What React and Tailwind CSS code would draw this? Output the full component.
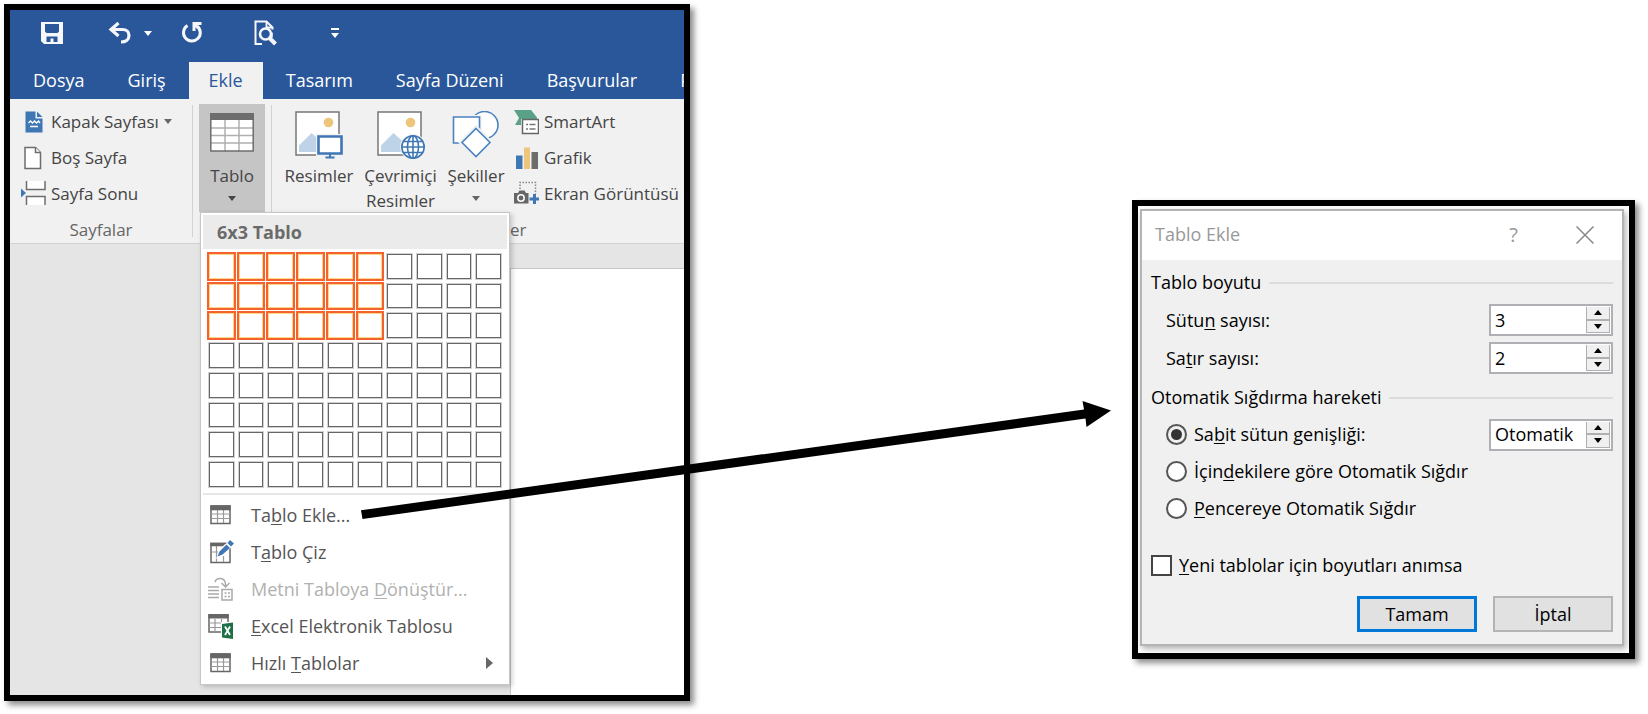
import { useState } from 'react';

const TABS = ['Dosya', 'Giriş', 'Ekle', 'Tasarım', 'Sayfa Düzeni', 'Başvurular', 'P'];
const GRID_COLS = 10;
const GRID_ROWS = 8;

function SaveIcon() {
    return (
        <svg width="22" height="22" viewBox="0 0 22 22">
            <path d="M0 0h22v22H3l-3-3z" fill="#f5f7fa" />
            <path d="M4 2h14v7.500l-1.500 1.500h-11L4 9.500zM5.500 14.500h11V20h-4v-3.500H9.500V20h-4z" fill="#2a579a" />
        </svg>
    );
}

function UndoIcon() {
    return (
        <svg width="24" height="22" viewBox="0 0 24 22" fill="none" stroke="#f5f7fa">
            <path d="M3 7.5h11.5c4 0 6.500 2.500 6.500 6 0 3.800-3 6.500-8 6.500" strokeWidth="3.2" />
            <path d="M10.500 1L3 7.500l7.500 6.500" strokeWidth="3.2" />
        </svg>
    );
}

function RedoIcon() {
    return (
        <svg width="22" height="22" viewBox="0 0 22 22" fill="none" stroke="#f5f7fa">
            <path d="M6.500 3.500a8.400 8.400 0 1 0 9.500.500" strokeWidth="3" />
            <path d="M20.500 1.500H13v7.500" strokeWidth="3" />
            <path d="M13 2l4 4" strokeWidth="2.500" />
        </svg>
    );
}

function PreviewIcon() {
    return (
        <svg width="24" height="26" viewBox="0 0 24 26" fill="none" stroke="#f5f7fa">
            <path d="M8 24H1.500V1.500h11l6 6v2" strokeWidth="2" />
            <path d="M12.500 2v5.500h5.500" strokeWidth="1.800" />
            <circle cx="11.500" cy="14" r="5.500" strokeWidth="2.600" />
            <path d="M15.500 18l6 6" strokeWidth="4" />
            <path d="M18 12.500v5" strokeWidth="1.600" />
        </svg>
    );
}

function Caret({ className = 'text-[#666]' }) {
    return (
        <svg className={className} width="8" height="5" viewBox="0 0 8 5" fill="currentColor">
            <path d="M0 0h8L4 5z" />
        </svg>
    );
}

function CoverPageIcon() {
    return (
        <svg width="25" height="24" viewBox="0 0 25 24">
            <path d="M4.500 1.500h10v7h7v14h-17z" fill="#3f77b5" />
            <path d="M16 1.500l5.500 5.500H16z" fill="#3f77b5" />
            <path d="M7.500 13l2-2 2 2 2-2 2 2 2-2 1.500 2" fill="none" stroke="#fff" strokeWidth="1.300" />
            <path d="M9 16.500h8" stroke="#fff" strokeWidth="1.500" />
        </svg>
    );
}

function BlankPageIcon() {
    return (
        <svg width="25" height="24" viewBox="0 0 25 24" fill="#fff" stroke="#6d6d6d" strokeWidth="1.500">
            <path d="M4 1.500h10.500l5 5v16H4z" />
            <path d="M14.500 1.500v5h5" />
        </svg>
    );
}

function PageBreakIcon() {
    return (
        <svg width="25" height="24" viewBox="0 0 25 24">
            <path d="M5.500 0h18.500v8.500H5.500zM5.500 15.500h18.500V24H5.500z" fill="#fff" />
            <path d="M5.500 0v8.500h18.500V0M5.500 24v-8.500h18.500V24" fill="none" stroke="#6d6d6d" strokeWidth="1.500" />
            <path d="M0 7.500l5 4.500-5 4.500z" fill="#3f77b5" />
        </svg>
    );
}

function TableIcon() {
    return (
        <svg width="44" height="39" viewBox="0 0 44 39">
            <path d="M1 1h42v37H1z" fill="#fff" />
            <path d="M0 15h44M0 22.500h44M0 30h44M15 7v31M29 7v31" stroke="#b0b0b0" strokeWidth="1.500" />
            <path d="M0 0h44v7H0z" fill="#6d6d6d" />
            <path d="M.8 1h42.400v37H.8z" fill="none" stroke="#6d6d6d" strokeWidth="1.500" />
        </svg>
    );
}

function PictureBase() {
    return (
        <>
            <path d="M1 1h43v43H1z" fill="#fff" stroke="#777" strokeWidth="1.500" />
            <circle cx="33.500" cy="11.500" r="4.800" fill="#edc57b" />
            <path d="M4 41V34.500L16.500 22l11 10v9z" fill="#bfd3e8" />
        </>
    );
}

function PictureIcon() {
    return (
        <svg width="48" height="48" viewBox="0 0 48 48">
            <PictureBase />
            <path d="M21 23h27v25H21z" fill="#f1f1f1" />
            <path d="M23.500 25.500h23v17h-23z" fill="#fff" stroke="#3f77b5" strokeWidth="2.600" />
            <path d="M35 42v4M30.500 46.500h9" stroke="#3f77b5" strokeWidth="2" />
        </svg>
    );
}

function OnlinePictureIcon() {
    return (
        <svg width="48" height="48" viewBox="0 0 48 48">
            <PictureBase />
            <circle cx="36" cy="36" r="13" fill="#f1f1f1" />
            <g fill="none" stroke="#3f77b5" strokeWidth="1.600">
                <circle cx="36" cy="36" r="11.200" fill="#fff" />
                <ellipse cx="36" cy="36" rx="5.500" ry="11.200" />
                <path d="M24.800 36h22.400M36 25v22M26.500 30.500h19M26.500 41.500h19" />
            </g>
        </svg>
    );
}

function ShapesIcon() {
    return (
        <svg width="48" height="48" viewBox="0 0 48 48" fill="#fff" stroke="#4a83c0" strokeWidth="1.600">
            <circle cx="32.500" cy="14" r="13.500" />
            <path d="M1.500 6h26v26h-26z" stroke="#f1f1f1" strokeWidth="4" />
            <path d="M1.500 6h26v26h-26z" />
            <path d="M24 16.500L39 31.500 24 46.500 9 31.500z" stroke="#f1f1f1" strokeWidth="4" />
            <path d="M24 17.500L38 31.500 24 45.500 10 31.500z" />
        </svg>
    );
}

function SmartArtIcon() {
    return (
        <svg width="25" height="26" viewBox="0 0 25 26">
            <path d="M0 1h17l6 7.500v1.500H7v6H1l4-7z" fill="#5aa287" />
            <path d="M8.500 10.500h16v14h-16z" fill="#fff" stroke="#666" strokeWidth="1.500" />
            <path d="M12 15.500h2M15.500 15.500h6M12 20h2M15.500 20h6" stroke="#777" strokeWidth="1.400" />
        </svg>
    );
}

function ChartIcon() {
    return (
        <svg width="25" height="24" viewBox="0 0 25 24">
            <path d="M2 9.500h6.500V23H2z" fill="#3f77b5" />
            <path d="M10 1.500h6V23h-6z" fill="#edc57b" />
            <path d="M17.500 6h6.500v17h-6.500z" fill="#6d6d6d" />
        </svg>
    );
}

function ScreenshotIcon() {
    return (
        <svg width="25" height="24" viewBox="0 0 25 24">
            <path d="M6 8V1.500h15.500V13" fill="none" stroke="#888" strokeWidth="1.500" strokeDasharray="1.500 1.500" />
            <path d="M0 12h4l1.500-2.500h5l1.500 2.500h2.500v10.500H0z" fill="#666" />
            <circle cx="7" cy="17" r="3.200" fill="none" stroke="#fff" strokeWidth="1.500" />
            <path d="M20.500 13v10M15.500 18h10" stroke="#3f77b5" strokeWidth="3" />
        </svg>
    );
}

function InsertTableIcon() {
    return (
        <svg width="26" height="24" viewBox="0 0 26 24">
            <path d="M3 3h19v17.500H3z" fill="#fff" stroke="#666" strokeWidth="1.500" />
            <path d="M3 11h19M3 15.500h19M9.500 6v14M15.500 6v14" stroke="#999" strokeWidth="1.200" />
            <path d="M2.300 2.300h20.400v5H2.300z" fill="#666" />
        </svg>
    );
}

function DrawTableIcon() {
    return (
        <svg width="26" height="26" viewBox="0 0 26 26">
            <path d="M3 4.500h19v19H3z" fill="#fff" stroke="#666" strokeWidth="1.500" />
            <path d="M3 13h7M8.500 7v16M15.500 17v6" stroke="#999" strokeWidth="1.200" />
            <path d="M2.300 3.700H18l-3 3.500H2.300z" fill="#666" />
            <path d="M8 20l2.500-7L20 2.500l5 4L15 16.500z" fill="#fff" />
            <path d="M9.500 17.500l2-5 7-7 3.500 3.500-7.500 6.500zM19.500 4l2.500-3 4 3.500L23 7.500z" fill="#3f77b5" />
        </svg>
    );
}

function ConvertIcon() {
    return (
        <svg width="26" height="24" viewBox="0 0 26 24" fill="none" stroke="#aaa" strokeWidth="1.500">
            <path d="M0 10h11M0 13.500h11M0 17h11M0 20.500h11" />
            <path d="M7 5c1.500-5 10-5 10.500 2v2M13.500 6l4 4 4-4" />
            <path d="M14 12.500h10v10.500H14z" />
            <path d="M16.500 16h2M20 16h2M16.500 19.500h2M20 19.500h2" />
        </svg>
    );
}

function ExcelIcon() {
    return (
        <svg width="26" height="26" viewBox="0 0 26 26">
            <path d="M1 2h19v17H1z" fill="#fff" stroke="#666" strokeWidth="1.500" />
            <path d="M1 10h19M1 14.500h13M7 6v13M13.500 6v13" stroke="#999" strokeWidth="1.200" />
            <path d="M.3 1h20.400v4.500H.3z" fill="#666" />
            <path d="M13 9h13v17H13z" fill="#fff" />
            <path d="M14 11l11-1.500v16.500L14 24.500z" fill="#1e7145" />
            <path d="M17 13.500l5 8.500M22 13.500l-5 8.500" stroke="#fff" strokeWidth="1.800" />
        </svg>
    );
}

function Divider() {
    return <div className="mt-px h-[132px] w-px bg-[#d2d2d2]" />;
}

function SmallButton({ icon, label, caret }) {
    return (
        <button type="button" className="flex h-9 items-center gap-[5px] whitespace-nowrap">
            {icon}
            {label}
            {caret && <Caret />}
        </button>
    );
}

function LargeButton({ icon, children, caret, className }) {
    return (
        <button type="button" className={`flex flex-col items-center pt-[7px] leading-[25px] ${className}`}>
            {icon}
            <span className="mt-1">{children}</span>
            {caret && <Caret className="mt-2 text-[#666]" />}
        </button>
    );
}

function MenuItem({ icon, children, disabled, submenu }) {
    return (
        <button
            type="button"
            disabled={disabled}
            className="flex h-[37px] w-full items-center gap-[17px] pr-3.5 pl-[5px] text-left whitespace-nowrap disabled:text-[#b1b1b1]"
        >
            {icon}
            <span className="flex-1">{children}</span>
            {submenu && (
                <svg width="7" height="12" viewBox="0 0 7 12" fill="#666">
                    <path d="M0 0l7 6-7 6z" />
                </svg>
            )}
        </button>
    );
}

function TableMenu() {
    const [size, setSize] = useState({ cols: 6, rows: 3 });
    const cells = Array.from({ length: GRID_COLS * GRID_ROWS }, (_, i) => ({
        col: (i % GRID_COLS) + 1,
        row: Math.floor(i / GRID_COLS) + 1,
    }));

    return (
        <div className="absolute top-full left-px z-10 w-[310px] border border-[#c6c6c6] bg-white p-0.5 text-[18px] text-[#555] shadow-[2px_2px_5px_rgba(0,0,0,0.2)]">
            <div className="flex h-[34px] items-center bg-[#ebebeb] pl-3.5 font-bold text-[#6a6a6a]">
                {size.cols}x{size.rows} Tablo
            </div>
            <div className="mx-[6px] mt-[5px] mb-[6px] grid grid-cols-10 gap-[5px]">
                {cells.map(({ col, row }) => (
                    <button
                        key={`${col}-${row}`}
                        type="button"
                        aria-label={`${col}x${row}`}
                        onMouseEnter={() => setSize({ cols: col, rows: row })}
                        className={
                            col <= size.cols && row <= size.rows
                                ? 'aspect-square border border-[#ffd588] ring-2 ring-[#f4622d]'
                                : 'aspect-square border border-[#666] ring-1 ring-[#666]/30'
                        }
                    />
                ))}
            </div>
            <div className="mb-0.5 h-0.5 bg-[#e6e6e6]" />
            <MenuItem icon={<InsertTableIcon />}>Ta<u>b</u>lo Ekle...</MenuItem>
            <MenuItem icon={<DrawTableIcon />}>T<u>a</u>blo Çiz</MenuItem>
            <MenuItem icon={<ConvertIcon />} disabled>Metni Tabloya <u>D</u>önüştür...</MenuItem>
            <MenuItem icon={<ExcelIcon />}><u>E</u>xcel Elektronik Tablosu</MenuItem>
            <MenuItem icon={<InsertTableIcon />} submenu>Hızlı <u>T</u>ablolar</MenuItem>
        </div>
    );
}

function WordWindow() {
    return (
        <section className="overflow-hidden border-[6px] border-black bg-[#e5e5e5] text-[#444] shadow-[4px_4px_6px_rgba(0,0,0,0.45)]">
            {/* Title bar */}
            <div className="flex h-[52px] items-center bg-[#2a579a] pb-1.5 pl-[31px]">
                <button type="button" aria-label="Kaydet"><SaveIcon /></button>
                <button type="button" aria-label="Geri Al" className="ml-[45px]"><UndoIcon /></button>
                <button type="button" aria-label="Geri Al listesi" className="ml-3"><Caret className="text-white" /></button>
                <button type="button" aria-label="Yinele" className="ml-[29px]"><RedoIcon /></button>
                <button type="button" aria-label="Baskı Önizleme" className="ml-[51px]"><PreviewIcon /></button>
                <button type="button" aria-label="Özelleştir" className="ml-[53px]">
                    <svg width="8" height="10" viewBox="0 0 8 10" fill="#fff">
                        <path d="M0 0h8v2H0zM0 5h8L4 10z" />
                    </svg>
                </button>
            </div>

            {/* Ribbon tabs */}
            <nav className="flex h-[37px] gap-[3px] bg-[#2a579a] pl-[3px] text-white">
                {TABS.map((tab) => (
                    <button
                        key={tab}
                        type="button"
                        className={
                            tab === 'Ekle'
                                ? 'bg-[#f1f1f1] px-5 whitespace-nowrap text-[#2a579a]'
                                : 'px-5 whitespace-nowrap'
                        }
                    >
                        {tab}
                    </button>
                ))}
            </nav>

            {/* Ribbon */}
            <div className="flex h-[145px] border-b border-[#d2d2d2] bg-[#f1f1f1] pt-[5px] text-[17px]">
                <div className="flex w-[182px] shrink-0 flex-col pl-[11px]">
                    <SmallButton icon={<CoverPageIcon />} label="Kapak Sayfası" caret />
                    <SmallButton icon={<BlankPageIcon />} label="Boş Sayfa" />
                    <SmallButton icon={<PageBreakIcon />} label="Sayfa Sonu" />
                    <div className="pt-[5px] pr-[11px] text-center text-[#666]">Sayfalar</div>
                </div>
                <Divider />
                <div className="relative mx-[6px] h-[108px]">
                    <button type="button" className="flex h-full w-[66px] flex-col items-center bg-[#c5c5c5] pt-[9px] leading-[25px]">
                        <TableIcon />
                        <span className="mt-[11px]">Tablo</span>
                        <Caret className="mt-2 text-[#444]" />
                    </button>
                    <TableMenu />
                </div>
                <Divider />
                <LargeButton icon={<PictureIcon />} className="ml-[7px] w-20 shrink-0">Resimler</LargeButton>
                <LargeButton icon={<OnlinePictureIcon />} className="w-[83px] shrink-0">
                    Çevrimiçi<br />Resimler
                </LargeButton>
                <LargeButton icon={<ShapesIcon />} className="w-[68px] shrink-0" caret>Şekiller</LargeButton>
                <div className="flex flex-col pl-1">
                    <SmallButton icon={<SmartArtIcon />} label="SmartArt" />
                    <SmallButton icon={<ChartIcon />} label="Grafik" />
                    <SmallButton icon={<ScreenshotIcon />} label="Ekran Görüntüsü" />
                    <div className="-ml-1 pt-[5px] text-[#666]">er</div>
                </div>
            </div>

            {/* Document */}
            <div className="pt-6 pl-[500px]">
                <div className="h-[427px] border-t border-l border-[#c6c6c6] bg-white" />
            </div>
        </section>
    );
}

function Spinner({ id, label, value, onChange, onStep }) {
    return (
        <div className="flex h-8 w-[124px] border-2 border-[#b0b0b4] bg-white p-px">
            <input
                id={id}
                aria-label={label}
                value={value}
                onChange={(e) => onChange(e.target.value)}
                className="w-full min-w-0 flex-1 pl-[3px] outline-none"
            />
            <div className="flex w-6 flex-col gap-0.5 border border-t-0 border-[#b0b0b0] bg-[#b0b0b0]">
                <button type="button" aria-label="Artır" onClick={() => onStep(1)} className="flex flex-1 items-center justify-center bg-[#f0f0f0]">
                    <svg width="8" height="5" viewBox="0 0 8 5"><path d="M4 0l4 5H0z" /></svg>
                </button>
                <button type="button" aria-label="Azalt" onClick={() => onStep(-1)} className="flex flex-1 items-center justify-center bg-[#f0f0f0]">
                    <svg width="8" height="5" viewBox="0 0 8 5"><path d="M0 0h8L4 5z" /></svg>
                </button>
            </div>
        </div>
    );
}

function GroupTitle({ children }) {
    return (
        <div className="flex h-[37px] items-center gap-2 whitespace-nowrap">
            {children}
            <div className="h-0.5 flex-1 bg-[#dcdcdc]" />
        </div>
    );
}

function FitOption({ value, fit, setFit, children }) {
    return (
        <label className="flex h-[37px] items-center gap-[7px] whitespace-nowrap">
            <input
                type="radio"
                name="fit"
                checked={fit === value}
                onChange={() => setFit(value)}
                className="size-[21px] appearance-none rounded-full border-2 border-[#555] bg-white p-[3px] checked:bg-[#333] checked:bg-clip-content"
            />
            <span>{children}</span>
        </label>
    );
}

function InsertTableDialog() {
    const [cols, setCols] = useState('3');
    const [rows, setRows] = useState('2');
    const [width, setWidth] = useState('Otomatik');
    const [fit, setFit] = useState('fixed');

    const step = (setter) => (delta) => setter((v) => String(Math.max(1, (parseInt(v, 10) || 0) + delta)));

    return (
        <section className="mt-[196px] border-[6px] border-black bg-white pt-[3px] pr-[5px] pb-[7px] pl-0.5 text-black shadow-[4px_4px_6px_rgba(0,0,0,0.45)]">
            <div className="border-2 border-[#b4b4b4] bg-[#f0f0f0] shadow-[2px_3px_6px_rgba(0,0,0,0.3)]">
                {/* Title */}
                <div className="flex h-[49px] items-center bg-white pr-7 pb-0.5 pl-[13px] text-[#999]">
                    <h2 className="flex-1">Tablo Ekle</h2>
                    <button type="button" aria-label="Yardım" className="mr-[58px] text-xl">?</button>
                    <button type="button" aria-label="Kapat">
                        <svg width="18" height="18" viewBox="0 0 18 18" stroke="#888" strokeWidth="1.500">
                            <path d="M.5.5l17 17M17.500.500l-17 17" />
                        </svg>
                    </button>
                </div>

                <div className="px-[9px] pt-1 pb-3">
                    <GroupTitle>Tablo boyutu</GroupTitle>
                    <div className="flex h-[38px] items-center justify-between pl-[15px]">
                        <label htmlFor="cols">Sütu<u>n</u> sayısı:</label>
                        <Spinner id="cols" value={cols} onChange={setCols} onStep={step(setCols)} />
                    </div>
                    <div className="flex h-[38px] items-center justify-between pl-[15px]">
                        <label htmlFor="rows">Sa<u>t</u>ır sayısı:</label>
                        <Spinner id="rows" value={rows} onChange={setRows} onStep={step(setRows)} />
                    </div>

                    <div className="mt-0.5">
                        <GroupTitle>Otomatik Sığdırma hareketi</GroupTitle>
                    </div>
                    <div className="flex items-center justify-between pl-[15px]">
                        <FitOption value="fixed" fit={fit} setFit={setFit}>Sa<u>b</u>it sütun genişliği:</FitOption>
                        <Spinner id="width" label="Sütun genişliği" value={width} onChange={setWidth} onStep={step(setWidth)} />
                    </div>
                    <div className="pl-[15px]">
                        <FitOption value="content" fit={fit} setFit={setFit}>İçin<u>d</u>ekilere göre Otomatik Sığdır</FitOption>
                        <FitOption value="window" fit={fit} setFit={setFit}><u>P</u>encereye Otomatik Sığdır</FitOption>
                    </div>

                    <label className="mt-5 flex h-[37px] items-center gap-[7px] whitespace-nowrap">
                        <input type="checkbox" className="size-[21px] appearance-none border-2 border-[#444] bg-white checked:bg-[#444]" />
                        <span><u>Y</u>eni tablolar için boyutları anımsa</span>
                    </label>

                    <div className="mt-3 flex justify-end gap-4">
                        <button type="button" className="h-9 w-[120px] border-3 border-[#0078d7] bg-[#e1e1e1]">Tamam</button>
                        <button type="button" className="h-9 w-[120px] border-2 border-[#b4b4b4] bg-[#e1e1e1]">İptal</button>
                    </div>
                </div>
            </div>
        </section>
    );
}

export default function App() {
    return (
        <main className="relative grid min-h-screen grid-cols-[686fr_442fr_503fr] items-start bg-white pt-1 pr-[13px] pb-3 pl-1 font-['Open_Sans',sans-serif] text-[18px] leading-[27px] [&_u]:underline-offset-2">
            <WordWindow />
            <div />
            <InsertTableDialog />

            {/* Arrow from the menu entry to the dialog */}
            <div className="pointer-events-none absolute top-[396px] right-[536px] left-[360px] z-20">
                <svg className="w-full" viewBox="0 0 752 126">
                    <path d="M1 114.300L724 13.500 722.500 5 751 14.500 726.500 31 725.500 22.500 2.500 123z" />
                </svg>
            </div>
        </main>
    );
}
